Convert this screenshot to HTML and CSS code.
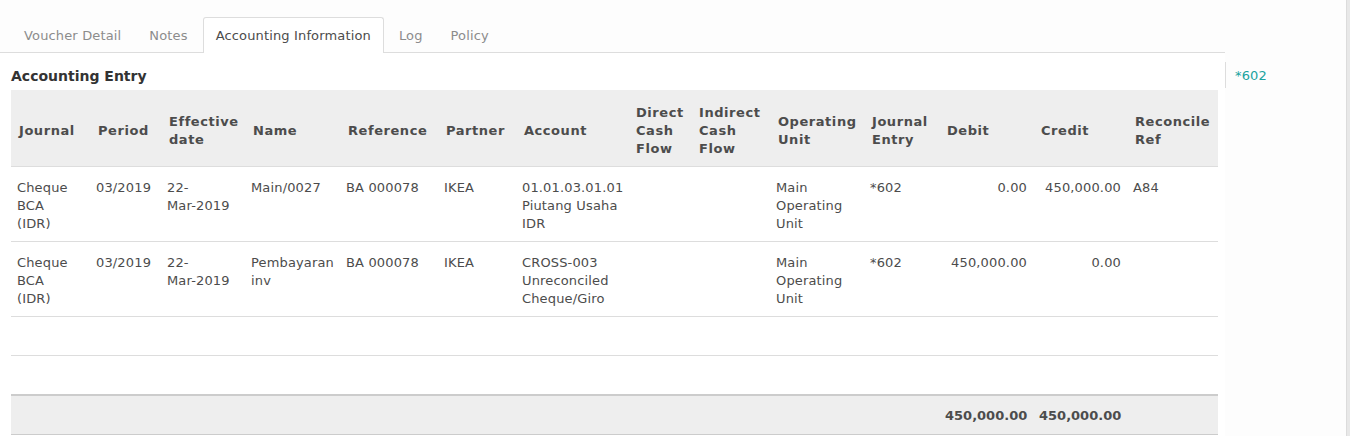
FILE: index.html
```html
<!DOCTYPE html>
<html>
<head>
<meta charset="utf-8">
<link rel="stylesheet" href="styles.css">
</head>
<body>
<div class="page">
  <div class="main">
    <ul class="tabs">
      <li class="tab">Voucher Detail</li>
      <li class="tab">Notes</li>
      <li class="tab active">Accounting Information</li>
      <li class="tab">Log</li>
      <li class="tab">Policy</li>
    </ul>
    <div class="content">
      <h3 class="title">Accounting Entry</h3>
      <table class="grid">
        <colgroup>
          <col style="width:79px"><col style="width:71px"><col style="width:84px"><col style="width:95px"><col style="width:98px"><col style="width:78px"><col style="width:112px"><col style="width:63px"><col style="width:79px"><col style="width:94px"><col style="width:75px"><col style="width:94px"><col style="width:94px"><col style="width:91px">
        </colgroup>
        <thead>
          <tr>
            <th>Journal</th><th>Period</th><th>Effective date</th><th>Name</th><th>Reference</th><th>Partner</th><th>Account</th><th>Direct Cash Flow</th><th>Indirect Cash Flow</th><th>Operating Unit</th><th>Journal Entry</th><th>Debit</th><th>Credit</th><th>Reconcile Ref</th>
          </tr>
        </thead>
        <tbody>
          <tr class="data">
            <td class="journal">Cheque BCA (IDR)</td><td>03/2019</td><td>22-<br>Mar-2019</td><td>Main/0027</td><td>BA 000078</td><td>IKEA</td><td>01.01.03.01.01 Piutang Usaha IDR</td><td></td><td></td><td>Main Operating Unit</td><td>*602</td><td class="num">0.00</td><td class="num">450,000.00</td><td>A84</td>
          </tr>
          <tr class="data">
            <td class="journal">Cheque BCA (IDR)</td><td>03/2019</td><td>22-<br>Mar-2019</td><td>Pembayaran inv</td><td>BA 000078</td><td>IKEA</td><td>CROSS-003 Unreconciled Cheque/Giro</td><td></td><td></td><td>Main Operating Unit</td><td>*602</td><td class="num">450,000.00</td><td class="num">0.00</td><td></td>
          </tr>
          <tr class="empty"><td colspan="14"></td></tr>
          <tr class="empty"><td colspan="14"></td></tr>
        </tbody>
        <tfoot>
          <tr>
            <td colspan="11"></td><td class="num">450,000.00</td><td class="num">450,000.00</td><td></td>
          </tr>
        </tfoot>
      </table>
    </div>
  </div>
  <div class="side">
    <div class="side-link">*602</div>
  </div>
  <div class="scroll"></div>
</div>
</body>
</html>
```

FILE: styles.css
```css
html, body {
  margin: 0;
  padding: 0;
  background: #ffffff;
}
body {
  font-family: "DejaVu Sans", Verdana, sans-serif;
  font-size: 13px;
  line-height: 18px;
  color: #4c4c4c;
  letter-spacing: 0.15px;
}
.page {
  display: flex;
  height: 436px;
  overflow: hidden;
}
.main {
  width: 1225px;
  flex: none;
}
.tabs {
  list-style: none;
  margin: 0;
  padding: 17px 0 0 11px;
  display: flex;
  border-bottom: 1px solid #dddddd;
  width: 1335px;
  background: #fdfdfd;
}
.tab {
  padding: 9px 12px 7px 12px;
  border: 1px solid transparent;
  border-bottom: none;
  margin-right: 2px;
  color: #8c8c8c;
  border-radius: 3px 3px 0 0;
}
.tab.active {
  background: #ffffff;
  border-color: #dddddd;
  color: #4c4c4c;
  margin-bottom: -1px;
  padding-bottom: 8px;
}
.content {
  padding: 14px 7px 0 11px;
}
.title {
  margin: 0 0 4px 0;
  font-size: 14px;
  line-height: 19px;
  font-weight: bold;
  color: #333333;
  letter-spacing: 0;
}
.grid {
  border-collapse: collapse;
  table-layout: fixed;
  width: 1207px;
}
.grid th {
  background: #eeeeee;
  text-align: left;
  font-weight: bold;
  padding: 14px 2px 8px 8px;
  vertical-align: middle;
  border-bottom: 1px solid #dddddd;
  color: #4c4c4c;
  letter-spacing: 0.55px;
}
.grid td {
  padding: 12px 6px 8px 6px;
  vertical-align: top;
}
.grid td.journal {
  padding-right: 10px;
}
.grid tr.data td {
  border-bottom: 1px solid #dddddd;
}
.grid tr.empty td {
  height: 38px;
  padding: 0;
  border-bottom: 1px solid #dddddd;
}
.grid td.num {
  text-align: right;
}
.grid tfoot td {
  background: #eeeeee;
  border-top: 2px solid #cccccc;
  border-bottom: 1px solid #cccccc;
  font-weight: bold;
  height: 36px;
  padding: 2px 6px 0 6px;
  vertical-align: middle;
  letter-spacing: 0;
}
.side {
  width: 121px;
  flex: none;
  background: #fdfdfd;
  padding-top: 62px;
}
.side-link {
  border-left: 1px solid #dddddd;
  padding: 5px 0 3px 9px;
  color: #1ba39f;
}
.scroll {
  width: 4px;
  flex: none;
  background: #e8e8e8;
  border-left: 1px solid #dcdcdc;
}
```
